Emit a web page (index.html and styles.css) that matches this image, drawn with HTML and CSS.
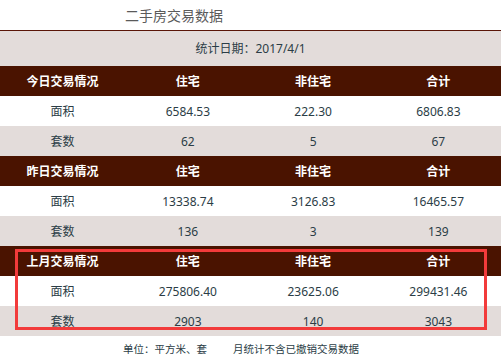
FILE: index.html
```html
<!DOCTYPE html>
<html lang="zh-CN">
<head>
<meta charset="utf-8">
<title>二手房交易数据</title>
<link rel="stylesheet" href="styles.css">
</head>
<body>
<div class="page">
  <div class="title">二手房交易数据</div>
  <div class="date">统计日期：2017/4/1</div>
  <div class="table">
    <div class="row head"><div>今日交易情况</div><div>住宅</div><div>非住宅</div><div>合计</div></div>
    <div class="row white"><div>面积</div><div>6584.53</div><div>222.30</div><div>6806.83</div></div>
    <div class="row grey"><div>套数</div><div>62</div><div>5</div><div>67</div></div>
    <div class="row head"><div>昨日交易情况</div><div>住宅</div><div>非住宅</div><div>合计</div></div>
    <div class="row white"><div>面积</div><div>13338.74</div><div>3126.83</div><div>16465.57</div></div>
    <div class="row grey"><div>套数</div><div>136</div><div>3</div><div>139</div></div>
    <div class="row head"><div>上月交易情况</div><div>住宅</div><div>非住宅</div><div>合计</div></div>
    <div class="row white"><div>面积</div><div>275806.40</div><div>23625.06</div><div>299431.46</div></div>
    <div class="row grey"><div>套数</div><div>2903</div><div>140</div><div>3043</div></div>
    <div class="highlight"></div>
  </div>
  <div class="footer"><span class="unit">单位：平方米、套</span><span class="note">月统计不含已撤销交易数据</span></div>
</div>
</body>
</html>
```
FILE: styles.css
```css
html, body {
  margin: 0;
  padding: 0;
  background: #ffffff;
}
body {
  font-family: "Noto Sans", "Noto Sans CJK SC", sans-serif;
  color: #2b3d46;
  width: 501px;
  height: 361px;
  overflow: hidden;
}
.page {
  width: 501px;
}
.title {
  box-sizing: border-box;
  height: 31px;
  line-height: 31px;
  padding-left: 125px;
  font-size: 14px;
  color: #5a5a5a;
  font-family: "Noto Sans CJK SC", sans-serif;
  border-bottom: 1px solid #5a1608;
}
.date {
  height: 35px;
  line-height: 35px;
  background: #e3dcda;
  text-align: center;
  font-size: 12px;
}
.table {
  position: relative;
}
.row {
  display: grid;
  grid-template-columns: repeat(4, 1fr);
  height: 30px;
  align-items: center;
  text-align: center;
  font-size: 12px;
}
.row.head {
  background: #4a1300;
  color: #ffffff;
  font-weight: 700;
}
.row.white {
  background: #ffffff;
}
.row.grey {
  background: #e3dcda;
}
.highlight {
  position: absolute;
  left: 15px;
  top: 183px;
  width: 472px;
  height: 81px;
  box-sizing: border-box;
  border: 3px solid #f23b3b;
}
.footer {
  display: flex;
  padding-left: 123px;
  height: 25px;
  line-height: 26px;
  font-size: 10.5px;
  color: #2b3d46;
  font-family: "Noto Sans CJK SC", sans-serif;
}
.unit {
  width: 110px;
}
```
